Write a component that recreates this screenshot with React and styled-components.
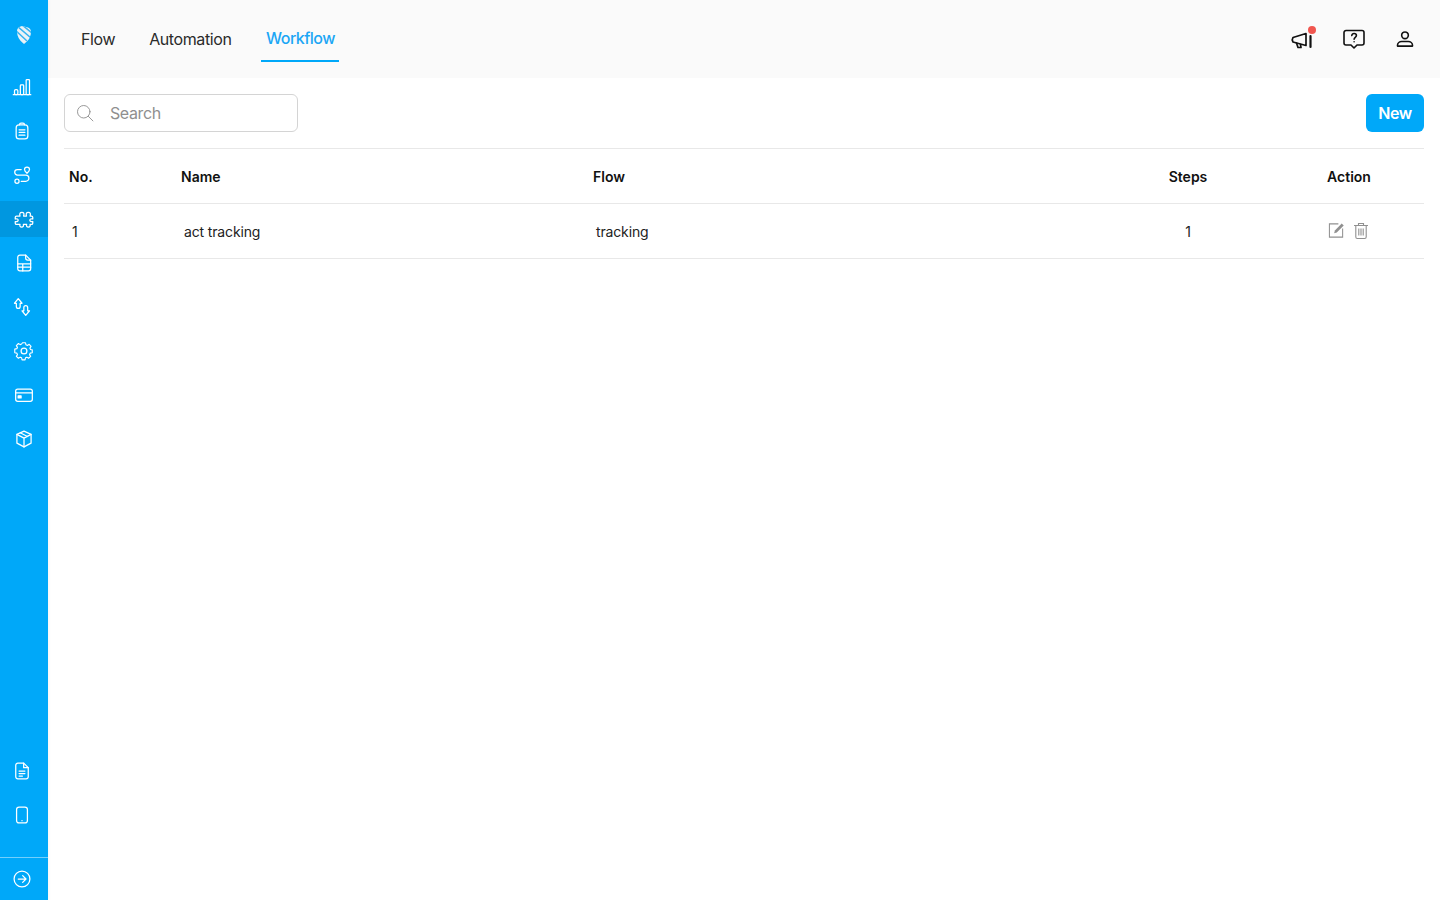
import React from 'react';
import styled, { createGlobalStyle } from 'styled-components';

const GlobalStyle = createGlobalStyle`
  html, body, #root {
    margin: 0;
    height: 100%;
  }
  body {
    font-family: Inter, "Liberation Sans", sans-serif;
    background: #fff;
    color: #111;
    overflow: hidden;
  }
`;

const Page = styled.div`
  display: flex;
  height: 900px;
`;

const Sidebar = styled.aside`
  width: 48px;
  flex: none;
  display: flex;
  flex-direction: column;
  background: #00a8f9;
  color: #fff;
  box-shadow: 1px 0 3px rgba(0, 0, 0, 0.04);
  position: relative;
`;

const LogoSlot = styled.div`
  height: 69px;
  flex: none;
  display: flex;
  justify-content: center;
  box-sizing: border-box;
  padding-top: 26px;
`;

const NavList = styled.nav`
  display: flex;
  flex-direction: column;
  gap: 8px;
  flex: ${props => (props.$grow ? 1 : 'none')};
  margin-bottom: ${props => (props.$grow ? '0' : '24px')};
`;

const NavItem = styled.div`
  height: 36px;
  display: flex;
  align-items: center;
  justify-content: center;
  box-sizing: border-box;
  padding-right: ${props => (props.$left ? '4px' : '0')};
  background: ${props => (props.$active ? '#0097e0' : 'transparent')};
`;

const SideFooter = styled.div`
  height: 42px;
  flex: none;
  border-top: 1px solid rgba(255, 255, 255, 0.45);
  display: flex;
  align-items: center;
  justify-content: center;
  padding-right: 4px;
`;

const Main = styled.main`
  flex: 1;
  display: flex;
  flex-direction: column;
  min-width: 0;
`;

const Header = styled.header`
  height: 78px;
  flex: none;
  display: flex;
  align-items: flex-start;
  justify-content: space-between;
  background: #fafafa;
  padding: 0 23px 0 17px;
`;

const Tabs = styled.div`
  display: flex;
  gap: 9px;
  padding-top: 16px;
`;

const Tab = styled.div`
  height: 46px;
  box-sizing: border-box;
  padding: ${props => (props.$active ? '13px 4px 0 4.5px' : '14px 9px 0 16px')};
  margin-left: ${props => (props.$active ? '12px' : '0')};
  font-size: 16px;
  line-height: 19px;
  letter-spacing: ${props => (props.$active ? '-0.5px' : '-0.4px')};
  color: ${props => (props.$active ? '#1ba6f5' : '#2a2a2a')};
  font-weight: ${props => (props.$active ? 500 : 400)};
  border-bottom: 2px solid ${props => (props.$active ? '#00a8f9' : 'transparent')};
`;

const HeaderIcons = styled.div`
  display: flex;
  align-items: center;
  gap: 27.5px;
  padding-top: 27px;
`;

const IconButton = styled.div`
  position: relative;
  width: 24px;
  height: 24px;
  display: flex;
  align-items: center;
  justify-content: center;
  color: #111;
`;

const Dot = styled.span`
  position: absolute;
  top: -1px;
  right: -2px;
  width: 8px;
  height: 8px;
  border-radius: 50%;
  background: #f0564f;
`;

const Content = styled.div`
  flex: 1;
  padding: 16px 16px 0;
`;

const Toolbar = styled.div`
  display: flex;
  align-items: center;
  justify-content: space-between;
  height: 38px;
  margin-bottom: 16px;
`;

const SearchBox = styled.div`
  width: 234px;
  height: 38px;
  box-sizing: border-box;
  display: flex;
  align-items: center;
  gap: 15px;
  padding-left: 10px;
  border: 1px solid #d4d4d4;
  border-radius: 6px;
  color: #8f8f8f;
`;

const SearchInput = styled.input`
  border: none;
  outline: none;
  background: transparent;
  width: 170px;
  padding: 0;
  font: 400 16px Inter, "Liberation Sans", sans-serif;
  letter-spacing: -0.4px;
  color: #333;

  &::placeholder {
    color: #8f8f8f;
    opacity: 1;
  }
`;

const NewButton = styled.button`
  width: 58px;
  height: 38px;
  border: none;
  border-radius: 6px;
  background: #00a8f9;
  color: #fff;
  padding: 0;
  font: 600 16px Inter, "Liberation Sans", sans-serif;
  letter-spacing: -0.4px;
  cursor: pointer;
`;

const Row = styled.div`
  display: grid;
  grid-template-columns: 112px 412px 1fr 172px 150px;
  align-items: center;
  box-sizing: border-box;
  font-size: 14px;
  border-bottom: 1px solid #e8e8e8;
  border-top: ${props => (props.$head ? '1px solid #e8e8e8' : 'none')};
  height: ${props => (props.$head ? '56px' : '55px')};
`;

const HeadCell = styled.div`
  font-weight: 600;
  color: #111;
  padding-left: ${props => (props.$center ? '0' : '5px')};
  text-align: ${props => (props.$center ? 'center' : 'left')};
`;

const BodyCell = styled.div`
  color: #222;
  letter-spacing: -0.15px;
  padding-left: ${props => (props.$center ? '0' : '8px')};
  text-align: ${props => (props.$center ? 'center' : 'left')};
`;

const ActionCell = styled.div`
  display: flex;
  justify-content: center;
  align-items: center;
  gap: 8px;
  color: #909090;
  margin-top: -1px;
  padding-right: 2px;
`;

const Svg = ({ size = 20, sw = 1.5, children }) => (
  <svg width={size} height={size} viewBox="0 0 24 24" fill="none" stroke="currentColor" strokeWidth={sw} strokeLinecap="round" strokeLinejoin="round">
    {children}
  </svg>
);

const Logo = () => (
  <svg width="14" height="18" viewBox="0 0 14 18">
    <defs>
      <clipPath id="logo-clip">
        <path d="M5 0 L11 1.500 Q14 2.500 14 6 Q14 13 7 18 Q0 13 0 5 Q0 1 5 0 Z" />
      </clipPath>
    </defs>
    <g clipPath="url(#logo-clip)">
      <rect width="14" height="18" fill="#eaf2f6" />
      <path d="M-2 4 L10 15 M0 0 L14 12 M4 -2 L16 8" stroke="#35b4f2" strokeWidth="1.500" />
    </g>
  </svg>
);

const ChartIcon = () => (
  <Svg>
    <rect x="3" y="15" width="4" height="6" rx="1.500" />
    <rect x="10" y="9.500" width="4" height="11.500" rx="1" />
    <rect x="17" y="3" width="4" height="18" rx="1" />
    <path d="M1.500 21.200h21" />
  </Svg>
);

const ClipboardIcon = () => (
  <Svg>
    <rect x="5" y="4.500" width="14" height="17" rx="3.500" />
    <path d="M9 4.500c0-1.400.8-2 1.800-2h2.400c1 0 1.800.6 1.800 2" />
    <path d="M8.500 10.500h7M8.500 13.500h7M8.500 17h7" />
  </Svg>
);

const RouteIcon = () => (
  <Svg>
    <circle cx="6" cy="19.500" r="2.500" />
    <path d="M18 2.500a3 3 0 0 1 3 3c0 1.800-3 4.500-3 4.500s-3-2.700-3-4.500a3 3 0 0 1 3-3z" />
    <path d="M11 5.500H6.500a3 3 0 0 0 0 6.500h10a3.500 3.500 0 0 1 0 7.500H11" />
  </Svg>
);

const PuzzleIcon = () => (
  <Svg>
    <path d="M3 8.500h4.200c-.8-2.800 0-4.500 2.300-4.500s3 1.700 2 4.500h3.500c-.8-2.800-.2-4.500 2.200-4.500s3 1.700 2.100 4.500H21c.8 0 1.500.6 1.500 1.500v2c-2.200-.6-3.500.2-3.500 1.500s1.300 2 3.500 1.500v2c0 .8-.7 1.500-1.500 1.500h-1.800c.6 2-.2 3.200-2 3.200s-2.700-1.200-2-3.200h-4c.6 2-.2 3.200-2 3.200s-2.600-1.200-2-3.200H3c-.8 0-1.500-.7-1.500-1.500v-2c2.200.5 3.500-.2 3.500-1.500s-1.300-2.100-3.500-1.500v-2c0-.9.700-1.500 1.500-1.500z" />
  </Svg>
);

const SheetIcon = () => (
  <Svg>
    <path d="M7 2.500h7l6 6V19a2.500 2.500 0 0 1-2.500 2.500H7A2.500 2.500 0 0 1 4.500 19V5A2.500 2.500 0 0 1 7 2.500z" />
    <path d="M14 2.500V6a2.500 2.500 0 0 0 2.500 2.500H20" />
    <path d="M4.500 13h15.500M4.500 17h15.500M10.500 13v8.500" />
  </Svg>
);

const SwapIcon = () => (
  <Svg>
    <path d="M7.500 2 L12 7.500 H9.800 V11.500 A2.200 2.200 0 0 1 5.200 11.500 V7.500 H3 Z" />
    <path d="M16.500 22 L21 16.500 H18.800 V12.500 A2.200 2.200 0 0 0 14.200 12.500 V16.500 H12 Z" />
  </Svg>
);

const GearIcon = () => (
  <Svg>
    <circle cx="12" cy="12" r="3.500" />
    <path d="M10 2.500h4l.6 2.800 1.900.8 2.400-1.500 2.500 2.800-1.500 2.300.8 1.800 2.300.5v3.800l-2.800.6-.8 1.900 1.500 2.400-2.800 2.500-2.300-1.500-1.800.8-.6 2.800h-4l-.6-2.800-1.900-.8-2.300 1.500-2.800-2.500 1.500-2.400-.8-1.900-2.800-.6V11l2.800-.6.8-1.800-1.500-2.300 2.800-2.800 2.300 1.500 1.900-.8z" transform="translate(12 12) scale(.9) translate(-12 -13.500)" />
  </Svg>
);

const CardIcon = () => (
  <Svg>
    <rect x="2" y="5" width="20" height="14.500" rx="2.500" />
    <path d="M2 9.500h20" />
    <rect x="5" y="13" width="3.500" height="2.500" fill="currentColor" />
  </Svg>
);

const BoxIcon = () => (
  <Svg>
    <path d="M12 2.500 L20.500 6.500 V17 L12 21.500 L3.500 17 V6.500 Z" />
    <path d="M3.500 6.500 L12 11 L20.500 6.500 M12 11 V21.500 M7.500 4.500 L16 9" />
  </Svg>
);

const DocIcon = () => (
  <Svg>
    <path d="M7 2.500h7l5.500 5.500V19a2.500 2.500 0 0 1-2.500 2.500H7A2.500 2.500 0 0 1 4.500 19V5A2.500 2.500 0 0 1 7 2.500z" />
    <path d="M14 2.500V8h5.500" />
    <path d="M8.500 12h7M8.500 15h7M8.500 18h4" />
  </Svg>
);

const PhoneIcon = () => (
  <Svg>
    <rect x="5.500" y="2.500" width="13" height="19" rx="3" />
    <path d="M11.900 18.800h.2" />
  </Svg>
);

const ArrowCircleIcon = () => (
  <Svg>
    <circle cx="12" cy="12" r="9.500" />
    <path d="M7.500 12h9M12.800 8l4 4-4 4" />
  </Svg>
);

const SearchIcon = () => (
  <Svg size={20} sw={1.100}>
    <circle cx="10.500" cy="10.500" r="7.500" />
    <path d="M16 16l5.500 5.500" />
  </Svg>
);

const MegaphoneIcon = () => (
  <Svg size={24} sw={1.700}>
    <path d="M3 10.500 L16 6.500 V18.500 L3 15 C2 13.500 2 12 3 10.500z" />
    <path d="M6.500 16 L8 20.500 H11 L10.500 17.500" />
    <path d="M20.500 9v11" strokeWidth="2.200" />
  </Svg>
);

const HelpIcon = () => (
  <Svg size={24} sw={1.600}>
    <path d="M4 3.500h16a2 2 0 0 1 2 2V16a2 2 0 0 1-2 2h-5l-3 3-3-3H4a2 2 0 0 1-2-2V5.500a2 2 0 0 1 2-2z" />
    <path d="M9.800 8.500c.2-1.300 1.100-2 2.300-2s2.300.8 2.300 2c0 1.800-2.300 1.800-2.300 3.700" />
    <path d="M12.100 14.800h.02" />
  </Svg>
);

const UserIcon = () => (
  <Svg size={20} sw={1.900}>
    <circle cx="12" cy="7.500" r="4" />
    <path d="M3 20.500v-1c0-2.800 2.500-4.500 5-4.500h8c2.500 0 5 1.700 5 4.500v1z" />
  </Svg>
);

const EditIcon = () => (
  <svg width="17" height="17" viewBox="0 0 18 18" fill="none" stroke="currentColor" strokeWidth="1.100">
    <path d="M11 2H1.500v14H15.500V7" />
    <path d="M6.500 11.800l.8-2.800 7.200-7.500 2.200 2.200-7.400 7.300z" fill="currentColor" stroke="none" />
  </svg>
);

const TrashIcon = () => (
  <svg width="16" height="18" viewBox="0 0 16 18" fill="none" stroke="currentColor" strokeWidth="1.100">
    <path d="M1 3.500h14M5.500 3.500V1.500h5v2" />
    <path d="M2.800 3.500v11.500c0 .8.500 1.500 1.500 1.500h7.400c1 0 1.500-.7 1.500-1.500V3.500" />
    <path d="M5.800 6.500v7M8 6.500v7M10.200 6.500v7" />
  </svg>
);

const topNav = [
  { Icon: ChartIcon, left: true },
  { Icon: ClipboardIcon, left: true },
  { Icon: RouteIcon, left: true },
  { Icon: PuzzleIcon, active: true },
  { Icon: SheetIcon },
  { Icon: SwapIcon, left: true },
  { Icon: GearIcon },
  { Icon: CardIcon },
  { Icon: BoxIcon },
];
const bottomNav = [DocIcon, PhoneIcon];

export default function App() {
  return (
    <Page>
      <GlobalStyle />
      <Sidebar>
        <LogoSlot>
          <Logo />
        </LogoSlot>
        <NavList $grow>
          {topNav.map(({ Icon, left, active }, i) => (
            <NavItem key={i} $left={left} $active={active}>
              <Icon />
            </NavItem>
          ))}
        </NavList>
        <NavList>
          {bottomNav.map((Icon, i) => (
            <NavItem key={i} $left>
              <Icon />
            </NavItem>
          ))}
        </NavList>
        <SideFooter>
          <ArrowCircleIcon />
        </SideFooter>
      </Sidebar>
      <Main>
        <Header>
          <Tabs>
            <Tab>Flow</Tab>
            <Tab>Automation</Tab>
            <Tab $active>Workflow</Tab>
          </Tabs>
          <HeaderIcons>
            <IconButton>
              <MegaphoneIcon />
              <Dot />
            </IconButton>
            <IconButton>
              <HelpIcon />
            </IconButton>
            <IconButton>
              <UserIcon />
            </IconButton>
          </HeaderIcons>
        </Header>
        <Content>
          <Toolbar>
            <SearchBox>
              <SearchIcon />
              <SearchInput placeholder="Search" />
            </SearchBox>
            <NewButton>New</NewButton>
          </Toolbar>
          <Row $head>
            <HeadCell>No.</HeadCell>
            <HeadCell>Name</HeadCell>
            <HeadCell>Flow</HeadCell>
            <HeadCell $center>Steps</HeadCell>
            <HeadCell $center>Action</HeadCell>
          </Row>
          <Row>
            <BodyCell>1</BodyCell>
            <BodyCell>act tracking</BodyCell>
            <BodyCell>tracking</BodyCell>
            <BodyCell $center>1</BodyCell>
            <ActionCell>
              <EditIcon />
              <TrashIcon />
            </ActionCell>
          </Row>
        </Content>
      </Main>
    </Page>
  );
}
